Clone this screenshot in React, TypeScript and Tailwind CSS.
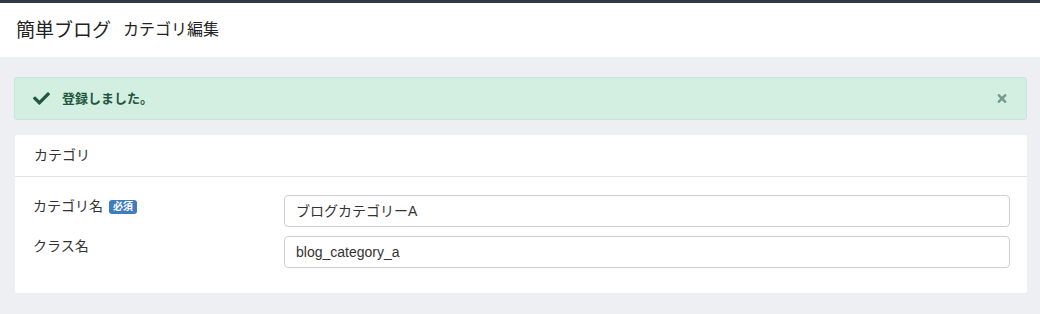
import React from "react";
import { FaCheck, FaTimes } from "react-icons/fa";

const font = { fontFamily: '"Liberation Sans", "Noto Sans CJK JP", sans-serif' };

export default function App() {
  return (
    <div className="w-[1040px] h-[314px] bg-[#eeeff3] text-[#333]" style={font}>
      <div className="h-[3px] bg-[#2d3b48]" />
      <div className="h-[54px] bg-white flex items-center pl-[16px] gap-[12px]">
        <span className="text-[19px] text-[#222] leading-none">簡単ブログ</span>
        <span className="text-[16px] text-[#222] leading-none">カテゴリ編集</span>
      </div>
      <div className="pl-[14px] pr-[13px] pt-[20px]">
        <div className="h-[43px] bg-[#d3efe2] border border-[#c4e8d7] rounded-[3px] flex items-center pl-[18px] pr-[18px]">
          <FaCheck className="text-[#22573f] w-[17px] h-[17px]" />
          <span className="ml-[12px] text-[13px] font-bold text-[#22573f]">登録しました。</span>
          <FaTimes className="ml-auto text-[#6f9c8c] w-[12px] h-[13px]" />
        </div>
        <div className="mt-[15px] ml-[1px] bg-white rounded-[2px]">
          <div className="h-[42px] flex items-center pl-[19px] text-[14px] border-b border-[#e3e3e3]">
            カテゴリ
          </div>
          <div className="pt-[18px] pb-[25px] pl-[18px] pr-[17px] flex flex-col gap-[9px]">
            <div className="flex">
              <div className="w-[251px] flex items-start gap-[6px] pt-[1px] text-[14px] leading-[20px]">
                <span>カテゴリ名</span>
                <span className="mt-[4px] h-[14px] px-[4px] bg-[#3f7cbf] text-white text-[10px] font-bold leading-[14px] rounded-[3px]">
                  必須
                </span>
              </div>
              <div className="flex-1 h-[32px] border border-[#cfcfcf] rounded-[4px] flex items-center pl-[11px] text-[14px] text-[#333]">
                ブログカテゴリーA
              </div>
            </div>
            <div className="flex">
              <div className="w-[251px] text-[14px] leading-[20px] pt-[0px]">クラス名</div>
              <div className="flex-1 h-[32px] border border-[#cfcfcf] rounded-[4px] flex items-center pl-[11px] text-[14px] text-[#333]">
                blog_category_a
              </div>
            </div>
          </div>
        </div>
      </div>
    </div>
  );
}
